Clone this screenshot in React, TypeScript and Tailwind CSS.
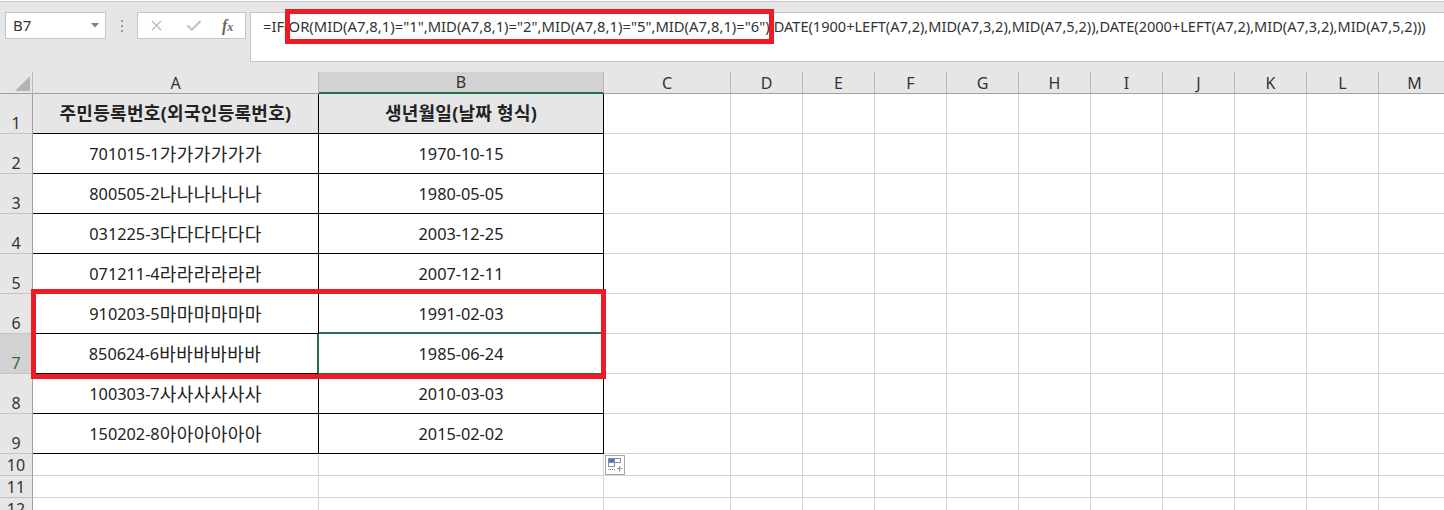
import { X, Check } from "lucide-react";

const font = { fontFamily: '"Noto Sans", "Noto Sans CJK KR", sans-serif' };
const colWidths = "33px 286px 285px 127px repeat(10, 72px)";
const cols = ["A", "B", "C", "D", "E", "F", "G", "H", "I", "J", "K", "L", "M"];
const data: [string, string, string][] = [
  ["", "", ""],
  ["701015-1", "가가가가가가", "1970-10-15"],
  ["800505-2", "나나나나나나", "1980-05-05"],
  ["031225-3", "다다다다다다", "2003-12-25"],
  ["071211-4", "라라라라라라", "2007-12-11"],
  ["910203-5", "마마마마마마", "1991-02-03"],
  ["850624-6", "바바바바바바", "1985-06-24"],
  ["100303-7", "사사사사사사", "2010-03-03"],
  ["150202-8", "아아아아아아", "2015-02-02"],
];
const formulaA = '=IF(OR(MID(A7,8,1)="1",MID(A7,8,1)="2",MID(A7,8,1)="5",MID(A7,8,1)="6"),';
const formulaB = "DATE(1900+LEFT(A7,2),MID(A7,3,2),MID(A7,5,2)),DATE(2000+LEFT(A7,2),MID(A7,3,2),MID(A7,5,2)))";

function RowHead({ n, h }: { n: number; h: string }) {
  const sel = n === 7;
  return (
    <div className={`${h} ${sel ? "bg-[#d2d2d2] text-[#1f6e43]" : "bg-[#e6e6e6] text-[#333]"} border-r border-b border-r-[#a0a0a0] border-b-[#c4c4c4] flex items-end justify-center text-[16px] leading-[20px]`}>
      {n}
    </div>
  );
}

export default function App() {
  return (
    <div className="relative w-[1444px] h-[510px] overflow-hidden bg-white text-[#222]" style={font}>
      <div className="h-[71px] bg-[#e6e6e6] border-t border-t-[#c8c8c8] mt-[1px] flex items-start pt-[10px] pl-[5px]">
        <div className="w-[101px] h-[27px] bg-white border border-[#c6c6c6] flex items-center justify-between pl-[7px] pr-[6px] text-[15px] text-[#333]">
          <span>B7</span>
          <svg width="8" height="5" viewBox="0 0 8 5"><path d="M0 0h8L4 4.5z" fill="#808080" /></svg>
        </div>
        <div className="w-[31px] h-[27px] flex flex-col items-center justify-center gap-[3px]">
          <i className="w-[2px] h-[2px] bg-[#9a9a9a]" />
          <i className="w-[2px] h-[2px] bg-[#9a9a9a]" />
          <i className="w-[2px] h-[2px] bg-[#9a9a9a]" />
        </div>
        <div className="w-[109px] h-[27px] bg-white border border-[#c6c6c6] flex items-center pl-[10px]">
          <X size={17} strokeWidth={2.2} color="#c0c0c0" />
          <Check size={18} strokeWidth={2.6} color="#c0c0c0" className="ml-[20px]" />
          <span className="ml-[19px] text-[16px] italic font-bold text-[#666] leading-none" style={{ fontFamily: '"Liberation Serif", serif' }}>f<span className="text-[12px]">x</span></span>
        </div>
        <div className="ml-[4px] flex-1 h-[50px] bg-white border-l border-b border-t border-[#c6c6c6] pl-[12px] pt-[2px] leading-[22px] text-[#333] whitespace-nowrap overflow-hidden">
          <span className="text-[14.8px]">{formulaA}</span>
          <span className="text-[14.55px]">{formulaB}</span>
        </div>
      </div>

      <div className="grid" style={{ gridTemplateColumns: colWidths }}>
        <div className="h-[22px] bg-[#e6e6e6] border-r border-b border-r-[#b8b8b8] border-b-[#a0a0a0] flex items-end justify-end pr-[2px] pb-[2px]">
          <svg width="15" height="15" viewBox="0 0 15 15"><path d="M15 0v15H0z" fill="#b4b4b4" /></svg>
        </div>
        {cols.map((c) => (
          <div key={c} className={`h-[22px] border-r border-r-[#b8b8b8] flex items-center justify-center text-[16px] text-[#333] ${c === "B" ? "bg-[#d2d2d2] border-b-2 border-b-[#1f7246]" : "bg-[#e6e6e6] border-b border-b-[#a0a0a0]"}`}>
            {c}
          </div>
        ))}

        {data.map((row, i) => {
          const n = i + 1;
          const head = i === 0;
          return (
            <div key={n} className="contents">
              <RowHead n={n} h="h-[40px]" />
              <div className={`h-[40px] border-b flex items-center justify-center text-[16.3px] ${n === 7 ? "border-r-2 border-r-[#1f7246] border-b-black" : "border-r border-black"} ${head ? "bg-[#e7e6e6]" : "pt-[2px]"}`}>
                {head ? (
                  <span className="text-[18px] font-bold tracking-[0.3px]">주민등록번호(외국인등록번호)</span>
                ) : (
                  <>
                    <span>{row[0]}</span>
                    <span className="text-[18px] tracking-[0.45px]">{row[1]}</span>
                  </>
                )}
              </div>
              <div className={`h-[40px] border-r flex items-center justify-center text-[16.3px] ${head ? "bg-[#e7e6e6]" : "pt-[2px]"} ${n === 7 ? "border-b border-r-black border-b-[#1f7246]" : n === 6 ? "border-b-2 border-r-black border-b-[#1f7246]" : "border-b border-black"}`}>
                {head ? <span className="text-[18px] font-bold tracking-[0.25px]">생년월일(날짜 형식)</span> : row[2]}
              </div>
              {cols.slice(2).map((c) => (
                <div key={c} className="h-[40px] border-r border-b border-[#d4d4d4]" />
              ))}
            </div>
          );
        })}

        {[10, 11, 12].map((n) => (
          <div key={n} className="contents">
            <RowHead n={n} h="h-[22px]" />
            {cols.map((c) => (
              <div key={c} className="h-[22px] border-r border-b border-[#d4d4d4]" />
            ))}
          </div>
        ))}
      </div>

      {/* annotation boxes */}
      <div className="absolute left-[285px] top-[9px] w-[489px] h-[35px] border-[5px] border-[#ed1c24]" />
      <div className="absolute left-[31px] top-[289px] w-[575px] h-[90px] border-[5px] border-[#ed1c24]" />

      {/* paste options */}
      <div className="absolute left-[605px] top-[455px] w-[20px] h-[20px] bg-white border border-[#a8a8a8]">
        <svg width="18" height="18" viewBox="0 0 18 18">
          <rect x="2.5" y="2.5" width="6" height="4" fill="#3b78e7" stroke="#8e8e8e" />
          <rect x="8.5" y="2.5" width="6" height="4" fill="#fff" stroke="#8e8e8e" />
          <rect x="2.5" y="6.5" width="6" height="4" fill="#fff" stroke="#8e8e8e" />
          <path d="M2 13.5h1M4 13.5h1M6 13.5h1M8 13.5h1" stroke="#8a8a8a" />
          <path d="M11 12.5h5.5M13.5 10v5.5" stroke="#8e8e8e" />
        </svg>
      </div>
    </div>
  );
}
